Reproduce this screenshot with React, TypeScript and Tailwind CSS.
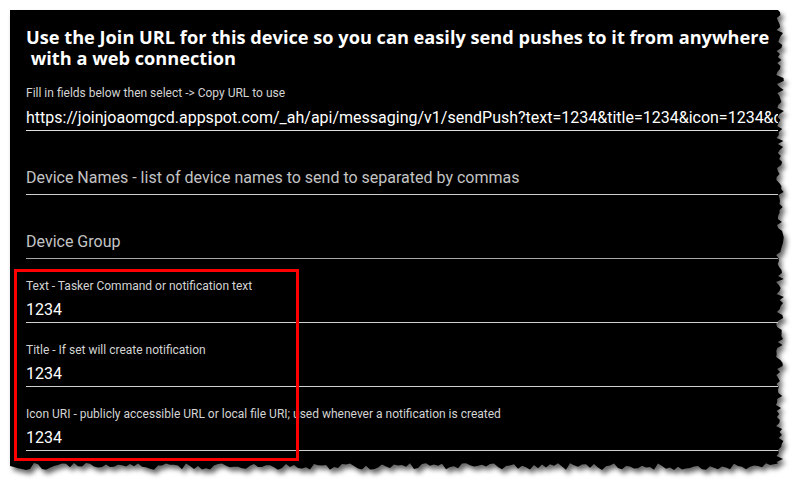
import React from "react";

// torn paper edge for the screenshot panel
function tornPath(w: number, h: number) {
  let seed = 7;
  const rnd = () => {
    seed = (seed * 9301 + 49297) % 233280;
    return seed / 233280;
  };
  const pts: string[] = ["M0,0", `L${w - 6},0`];
  for (let y = 2; y < h - 6; y += 3) {
    pts.push(`L${(w - 8 + rnd() * 8).toFixed(1)},${y}`);
  }
  for (let x = w - 6; x > 0; x -= 4) {
    pts.push(`L${x},${(h - 7 + rnd() * 7).toFixed(1)}`);
  }
  pts.push(`L0,${h - 4}`, "Z");
  return pts.join(" ");
}

const PANEL_W = 774;
const PANEL_H = 460;
const TORN = tornPath(PANEL_W, PANEL_H);

function Field({ label, value }: { label: string; value: string }) {
  return (
    <div className="h-[64px] flex flex-col justify-end">
      <div className="text-[12px] leading-[14px] text-[#d4d4d4] mb-[7px] whitespace-nowrap">
        {label}
      </div>
      <div className="text-[16px] leading-[20px] text-white pb-[2px] border-b border-[#d0d0d0]">
        {value}
      </div>
    </div>
  );
}

function Placeholder({ text, line }: { text: string; line: string }) {
  return (
    <div className="h-[64px] flex flex-col justify-end">
      <div
        className={`text-[16px] leading-[20px] text-[#c4c4c4] pb-[6px] border-b ${line}`}
      >
        {text}
      </div>
    </div>
  );
}

export default function App() {
  return (
    <div className="w-[801px] h-[491px] bg-white pt-[10px] pl-[10px] overflow-hidden">
      <div className="relative w-[774px] h-[460px]">
        <svg
          className="absolute left-0 top-0 overflow-visible"
          width={PANEL_W}
          height={PANEL_H}
        >
          <defs>
            <filter id="sh" x="-5%" y="-5%" width="115%" height="115%">
              <feDropShadow dx="3" dy="4" stdDeviation="2.8" floodColor="#000" floodOpacity="0.6" />
            </filter>
          </defs>
          <path d={TORN} fill="#000" filter="url(#sh)" />
        </svg>

        <div
          className="relative pl-4 pr-[6px] pt-[17px] overflow-hidden"
          style={{ fontFamily: "Roboto, 'Liberation Sans', sans-serif" }}
        >
          <h1
            className="text-[18.2px] leading-[21px] font-bold text-white whitespace-nowrap"
            style={{ fontFamily: "'Open Sans', 'Noto Sans', sans-serif" }}
          >
            Use the Join URL for this device so you can easily send pushes to it from anywhere
            <br />
            {"\u00a0with a web connection"}
          </h1>

          <div className="mt-[17px]">
            <div className="text-[12px] leading-[14px] text-[#d4d4d4]">
              Fill in fields below then select -&gt; Copy URL to use
            </div>
            <div className="mt-[8px] text-[16px] leading-[20px] text-white pb-[2px] border-b border-[#e2e2e2] whitespace-nowrap overflow-hidden">
              https://joinjoaomgcd.appspot.com/_ah/api/messaging/v1/sendPush?text=1234&amp;title=1234&amp;icon=1234&amp;deviceId=
            </div>
          </div>

          <Placeholder
            text="Device Names - list of device names to send to separated by commas"
            line="border-[#cfcfcf]"
          />
          <Placeholder text="Device Group" line="border-[#a8a8a8]" />
          <Field label="Text - Tasker Command or notification text" value="1234" />
          <Field label="Title - If set will create notification" value="1234" />
          <Field
            label="Icon URI - publicly accessible URL or local file URI; used whenever a notification is created"
            value="1234"
          />
        </div>

        {/* red highlight box drawn over the fields */}
        <div className="absolute left-[4px] top-[259px] w-[285px] h-[192px] border-[3px] border-[#ff0000]" />
      </div>
    </div>
  );
}
